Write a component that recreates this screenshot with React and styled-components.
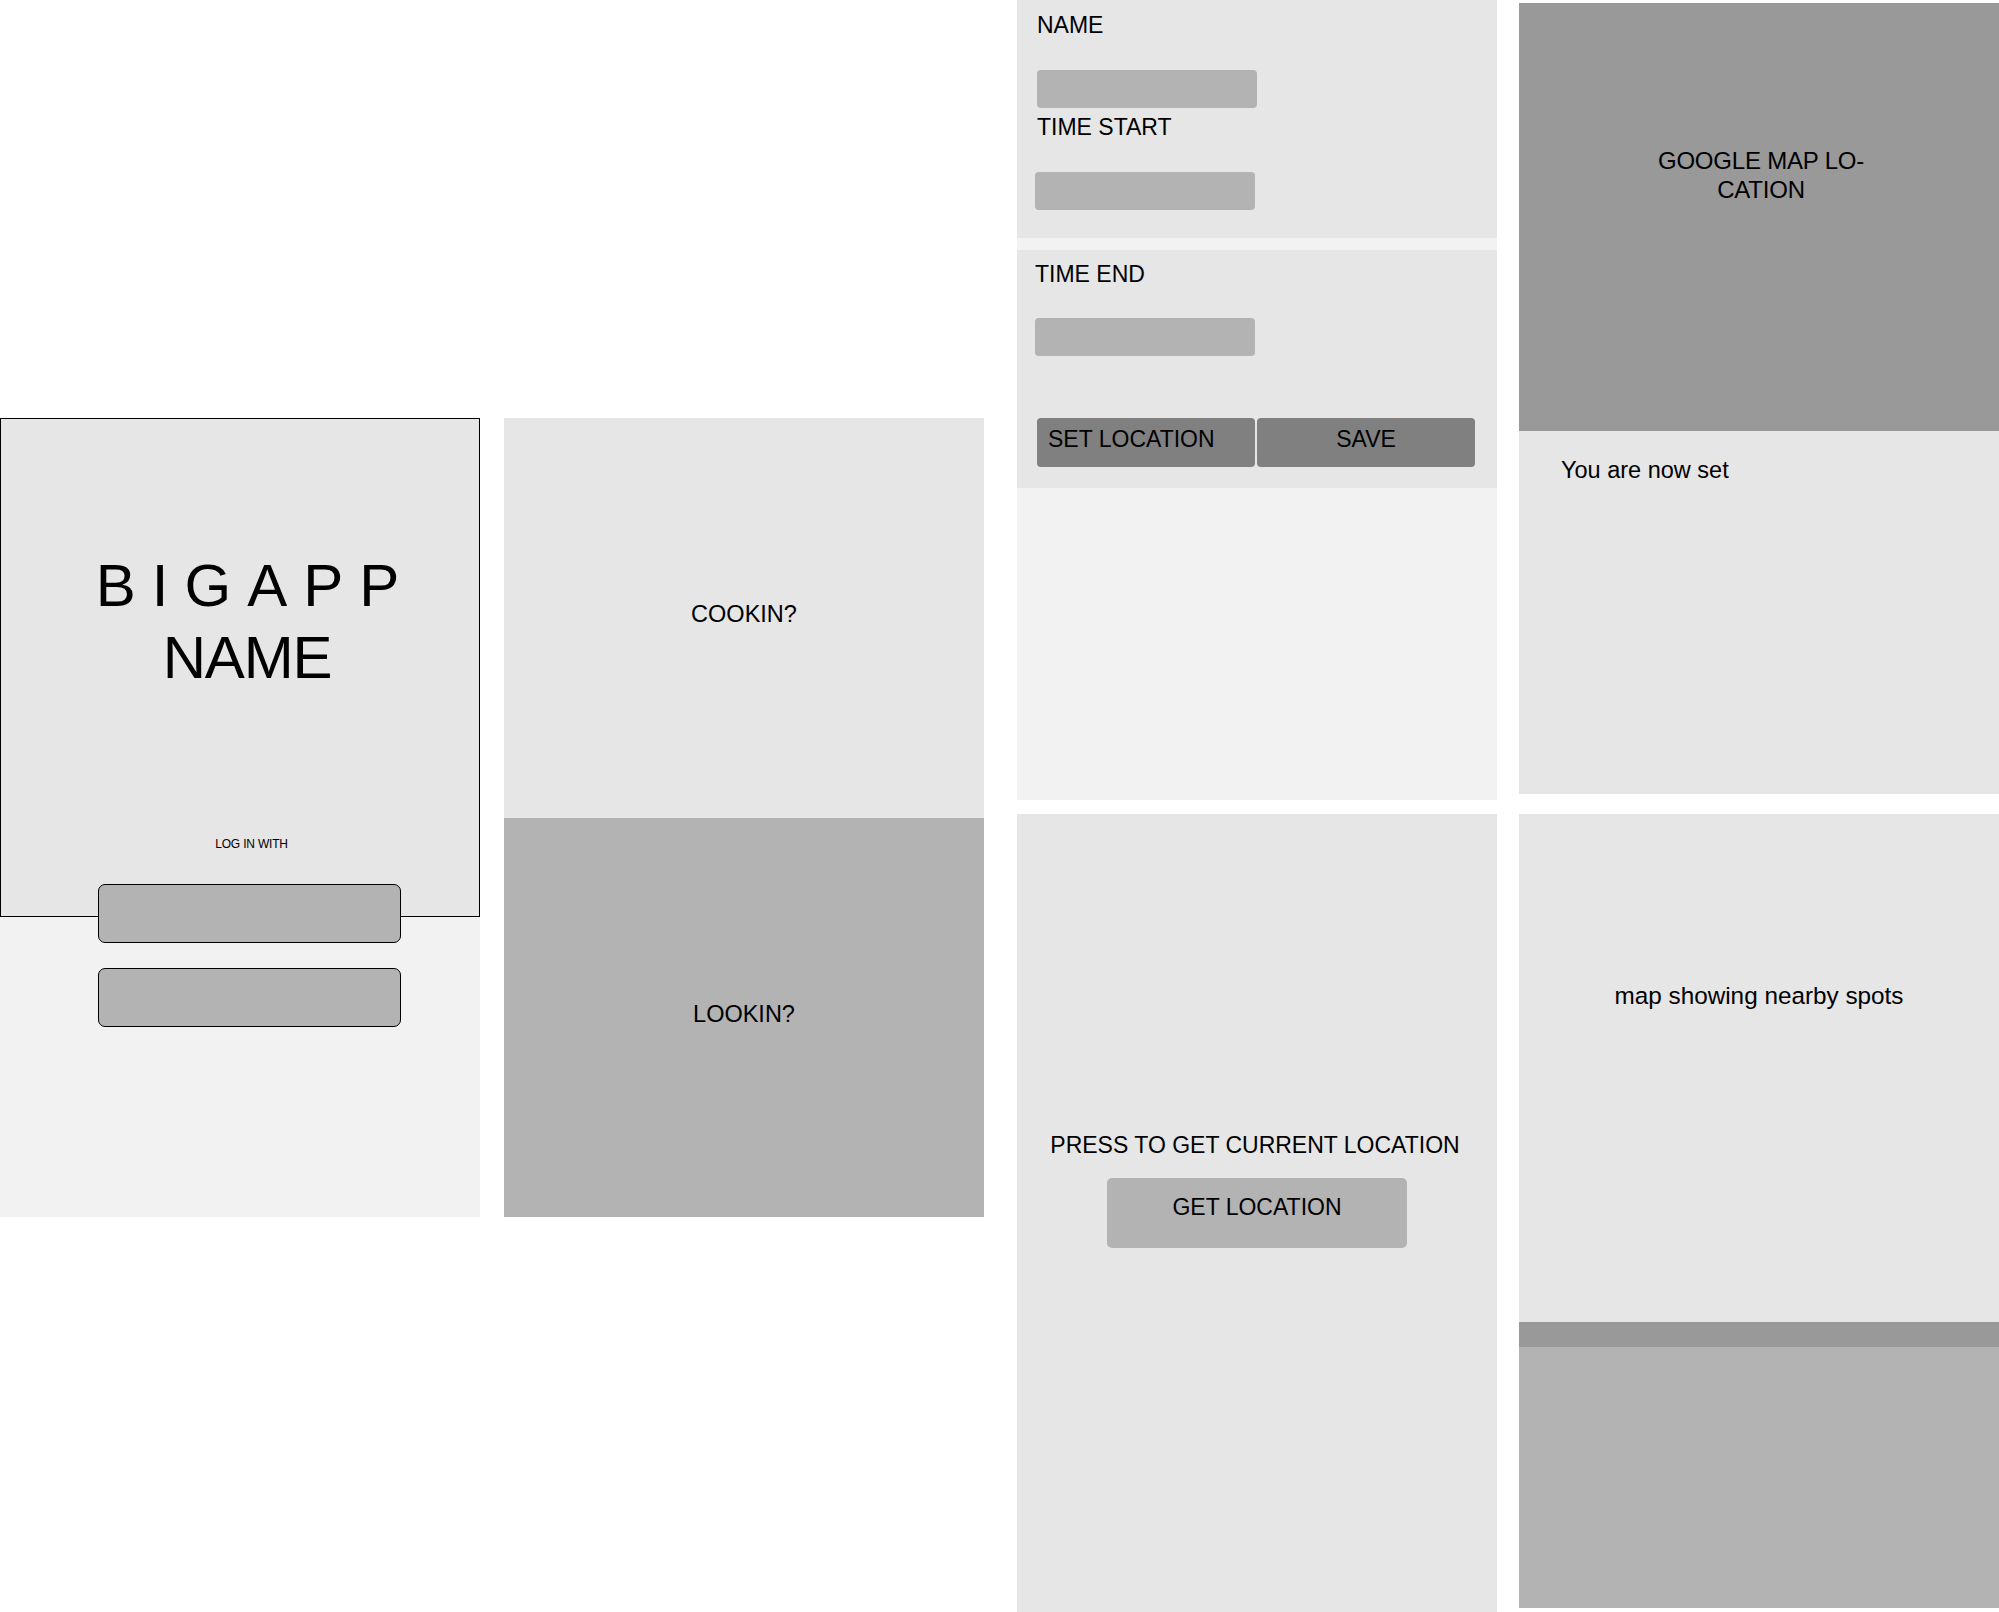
import React from "react";
import styled, { createGlobalStyle } from "styled-components";

const App = () => {
  return (
    <>
      <GlobalStyle />
      <Board>
        <Column $top={418}>
          <Screen $height={799} $bg="#f2f2f2">
            <Splash>
              <Title>
                <TitleLine $spread>BIGAPP</TitleLine>
                <TitleLine>NAME</TitleLine>
              </Title>
              <Caption>LOG IN WITH</Caption>
            </Splash>
            <LoginButtons>
              <LoginButton aria-label="Log in option one" />
              <LoginButton aria-label="Log in option two" />
            </LoginButtons>
          </Screen>
        </Column>

        <Column $top={418} $left={24}>
          <Screen $height={799}>
            <Choice>COOKIN?</Choice>
            <Choice $dark>LOOKIN?</Choice>
          </Screen>
        </Column>

        <Column $left={33} $gap={14}>
          <Screen $height={800} $bg="#f2f2f2">
            <FormSection $pad="11px 0 28px 20px">
              <Label>NAME</Label>
              <Input $mt={31} />
              <Label $mt={5}>TIME START</Label>
              <Input $mt={31} $ml={-2} />
            </FormSection>
            <FormSection $pad="10px 0 21px 18px" $mt={12}>
              <Label>TIME END</Label>
              <Input $mt={30} />
              <ButtonRow>
                <ActionButton $align="flex-start">SET LOCATION</ActionButton>
                <ActionButton>SAVE</ActionButton>
              </ButtonRow>
            </FormSection>
          </Screen>
          <Screen $height={800}>
            <Locate>
              <Label>PRESS TO GET CURRENT LOCATION</Label>
              <LocateButton>GET LOCATION</LocateButton>
            </Locate>
          </Screen>
        </Column>

        <Column $top={3} $left={22} $gap={20}>
          <Screen $height={791}>
            <MapBox>
              GOOGLE MAP LO-
              <br />
              CATION
            </MapBox>
            <Status>You are now set</Status>
          </Screen>
          <Screen $height={794}>
            <NearbyMap>map showing nearby spots</NearbyMap>
            <Divider />
            <ListArea />
          </Screen>
        </Column>
      </Board>
    </>
  );
};

export default App;

const GlobalStyle = createGlobalStyle`
  html, body {
    margin: 0;
    padding: 0;
    background: #fff;
  }
  body {
    font-family: "Liberation Sans", Arial, sans-serif;
    color: #000;
    overflow: hidden;
  }
`;

const Board = styled.main`
  display: flex;
  align-items: flex-start;
  width: 1999px;
  height: 1612px;
  overflow: hidden;
`;

const Column = styled.div`
  flex: 0 0 480px;
  display: flex;
  flex-direction: column;
  gap: ${p => p.$gap || 0}px;
  margin-left: ${p => p.$left || 0}px;
  padding-top: ${p => p.$top || 0}px;
`;

const Screen = styled.section`
  display: flex;
  flex-direction: column;
  flex-shrink: 0;
  height: ${p => p.$height}px;
  background: ${p => p.$bg || "#e6e6e6"};
`;

/* login */

const Splash = styled.div`
  box-sizing: border-box;
  height: 499px;
  padding: 131px 0 0 18px;
  display: flex;
  flex-direction: column;
  align-items: center;
  background: #e6e6e6;
  border: 1px solid #000;
`;

const Title = styled.h1`
  margin: 0;
  display: flex;
  flex-direction: column;
  align-items: center;
  font-size: 60px;
  font-weight: 400;
  line-height: 72px;
  letter-spacing: -1.5px;
`;

const TitleLine = styled.span`
  letter-spacing: ${p => (p.$spread ? "16px" : "-1.2px")};
  padding: ${p => (p.$spread ? "0 0 0 13px" : "0 4px 0 0")};
`;

const Caption = styled.p`
  margin: 143px 0 0 5px;
  font-size: 12px;
  line-height: 14px;
  letter-spacing: -0.2px;
`;

const LoginButtons = styled.div`
  margin-top: -33px;
  padding-left: 18px;
  display: flex;
  flex-direction: column;
  align-items: center;
  gap: 25px;
`;

const LoginButton = styled.button`
  box-sizing: border-box;
  width: 303px;
  height: 59px;
  padding: 0;
  background: #b3b3b3;
  border: 1px solid #000;
  border-radius: 7px;
`;

/* cookin / lookin */

const Choice = styled.div`
  flex: 1;
  display: flex;
  align-items: center;
  justify-content: center;
  padding-bottom: 6px;
  font-size: 23.5px;
  background: ${p => (p.$dark ? "#b3b3b3" : "#e6e6e6")};
`;

/* form */

const FormSection = styled.div`
  display: flex;
  flex-direction: column;
  align-items: flex-start;
  margin-top: ${p => p.$mt || 0}px;
  padding: ${p => p.$pad};
  background: #e6e6e6;
`;

const Label = styled.div`
  margin-top: ${p => p.$mt || 0}px;
  font-size: 23px;
  line-height: 28px;
`;

const Input = styled.div`
  width: 220px;
  height: 38px;
  margin-top: ${p => p.$mt || 0}px;
  margin-left: ${p => p.$ml || 0}px;
  background: #b3b3b3;
  border-radius: 4px;
`;

const ButtonRow = styled.div`
  display: flex;
  gap: 2px;
  margin: 62px 0 0 2px;
`;

const ActionButton = styled.button`
  box-sizing: border-box;
  width: 218px;
  height: 49px;
  display: flex;
  align-items: flex-start;
  justify-content: ${p => p.$align || "center"};
  padding: 7px 11px 0;
  background: #808080;
  border: none;
  border-radius: 4px;
  font-family: inherit;
  font-size: 23px;
  line-height: 28px;
  color: #000;
`;

/* get location */

const Locate = styled.div`
  display: flex;
  flex-direction: column;
  align-items: center;
  padding: 317px 4px 0 0;
`;

const LocateButton = styled.button`
  box-sizing: border-box;
  width: 300px;
  height: 70px;
  margin: 19px 0 0 4px;
  display: flex;
  align-items: flex-start;
  justify-content: center;
  padding-top: 15px;
  background: #b3b3b3;
  border: none;
  border-radius: 5px;
  font-family: inherit;
  font-size: 23px;
  line-height: 28px;
  color: #000;
`;

/* map screens */

const MapBox = styled.div`
  height: 428px;
  box-sizing: border-box;
  padding: 143px 0 0 4px;
  background: #999;
  text-align: center;
  font-size: 24px;
  line-height: 29px;
  letter-spacing: -0.2px;
`;

const Status = styled.p`
  margin: 0;
  padding: 25px 0 0 42px;
  font-size: 23.5px;
  line-height: 28px;
`;

const NearbyMap = styled.div`
  height: 508px;
  box-sizing: border-box;
  padding-top: 168px;
  text-align: center;
  font-size: 24.3px;
  line-height: 28px;
`;

const Divider = styled.div`
  height: 25px;
  background: #999;
`;

const ListArea = styled.div`
  flex: 1;
  background: #b3b3b3;
`;
